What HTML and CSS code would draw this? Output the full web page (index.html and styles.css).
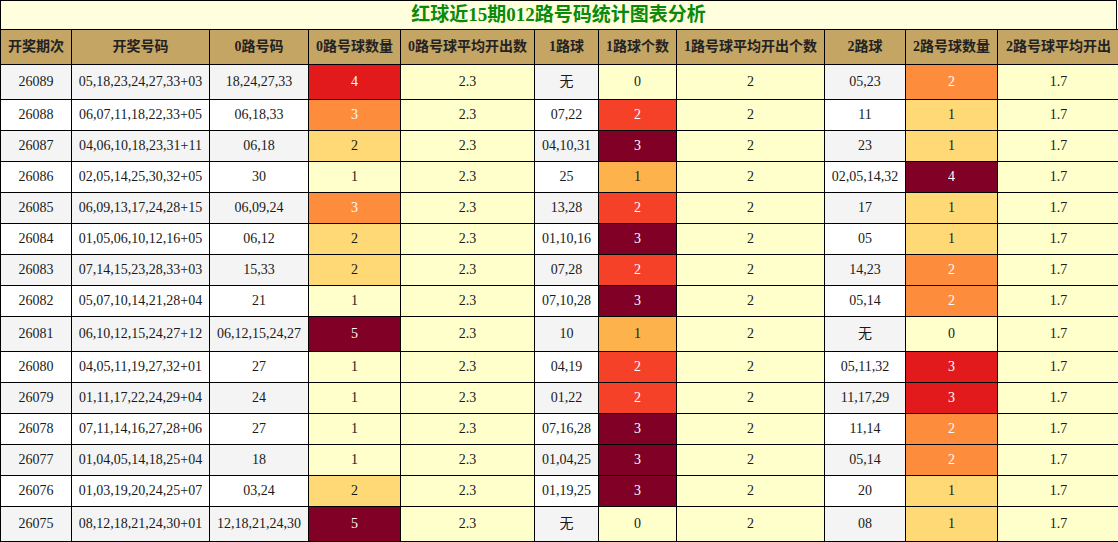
FILE: index.html
```html
<!DOCTYPE html>
<html lang="zh-CN">
<head>
<meta charset="utf-8">
<title>红球近15期012路号码统计图表分析</title>
<link rel="stylesheet" href="styles.css">
</head>
<body>
<div class="wrap">
  <div class="title">红球近15期012路号码统计图表分析</div>
  <table class="tbl">
    <colgroup>
      <col class="c1"><col class="c2"><col class="c3"><col class="c4"><col class="c5"><col class="c6"><col class="c7"><col class="c8"><col class="c9"><col class="c10"><col class="c11">
    </colgroup>
    <thead>
      <tr>
        <th>开奖期次</th><th>开奖号码</th><th>0路号码</th><th>0路号球数量</th><th>0路号球平均开出数</th><th>1路球</th><th>1路球个数</th><th>1路号球平均开出个数</th><th>2路球</th><th>2路号球数量</th><th>2路号球平均开出</th>
      </tr>
    </thead>
    <tbody>
      <tr class="tall"><td class="n">26089</td><td class="n">05,18,23,24,27,33+03</td><td class="n">18,24,27,33</td><td class="h4">4</td><td class="y">2.3</td><td class="n">无</td><td class="y">0</td><td class="y">2</td><td class="n">05,23</td><td class="h3">2</td><td class="y">1.7</td></tr>
      <tr><td class="n">26088</td><td class="n">06,07,11,18,22,33+05</td><td class="n">06,18,33</td><td class="h3">3</td><td class="y">2.3</td><td class="n">07,22</td><td class="g2">2</td><td class="y">2</td><td class="n">11</td><td class="h2">1</td><td class="y">1.7</td></tr>
      <tr><td class="n">26087</td><td class="n">04,06,10,18,23,31+11</td><td class="n">06,18</td><td class="h2">2</td><td class="y">2.3</td><td class="n">04,10,31</td><td class="h5">3</td><td class="y">2</td><td class="n">23</td><td class="h2">1</td><td class="y">1.7</td></tr>
      <tr><td class="n">26086</td><td class="n">02,05,14,25,30,32+05</td><td class="n">30</td><td class="y">1</td><td class="y">2.3</td><td class="n">25</td><td class="g1">1</td><td class="y">2</td><td class="n">02,05,14,32</td><td class="h5">4</td><td class="y">1.7</td></tr>
      <tr><td class="n">26085</td><td class="n">06,09,13,17,24,28+15</td><td class="n">06,09,24</td><td class="h3">3</td><td class="y">2.3</td><td class="n">13,28</td><td class="g2">2</td><td class="y">2</td><td class="n">17</td><td class="h2">1</td><td class="y">1.7</td></tr>
      <tr><td class="n">26084</td><td class="n">01,05,06,10,12,16+05</td><td class="n">06,12</td><td class="h2">2</td><td class="y">2.3</td><td class="n">01,10,16</td><td class="h5">3</td><td class="y">2</td><td class="n">05</td><td class="h2">1</td><td class="y">1.7</td></tr>
      <tr><td class="n">26083</td><td class="n">07,14,15,23,28,33+03</td><td class="n">15,33</td><td class="h2">2</td><td class="y">2.3</td><td class="n">07,28</td><td class="g2">2</td><td class="y">2</td><td class="n">14,23</td><td class="h3">2</td><td class="y">1.7</td></tr>
      <tr><td class="n">26082</td><td class="n">05,07,10,14,21,28+04</td><td class="n">21</td><td class="y">1</td><td class="y">2.3</td><td class="n">07,10,28</td><td class="h5">3</td><td class="y">2</td><td class="n">05,14</td><td class="h3">2</td><td class="y">1.7</td></tr>
      <tr class="tall"><td class="n">26081</td><td class="n">06,10,12,15,24,27+12</td><td class="n">06,12,15,24,27</td><td class="h5">5</td><td class="y">2.3</td><td class="n">10</td><td class="g1">1</td><td class="y">2</td><td class="n">无</td><td class="y">0</td><td class="y">1.7</td></tr>
      <tr><td class="n">26080</td><td class="n">04,05,11,19,27,32+01</td><td class="n">27</td><td class="y">1</td><td class="y">2.3</td><td class="n">04,19</td><td class="g2">2</td><td class="y">2</td><td class="n">05,11,32</td><td class="h4">3</td><td class="y">1.7</td></tr>
      <tr><td class="n">26079</td><td class="n">01,11,17,22,24,29+04</td><td class="n">24</td><td class="y">1</td><td class="y">2.3</td><td class="n">01,22</td><td class="g2">2</td><td class="y">2</td><td class="n">11,17,29</td><td class="h4">3</td><td class="y">1.7</td></tr>
      <tr><td class="n">26078</td><td class="n">07,11,14,16,27,28+06</td><td class="n">27</td><td class="y">1</td><td class="y">2.3</td><td class="n">07,16,28</td><td class="h5">3</td><td class="y">2</td><td class="n">11,14</td><td class="h3">2</td><td class="y">1.7</td></tr>
      <tr><td class="n">26077</td><td class="n">01,04,05,14,18,25+04</td><td class="n">18</td><td class="y">1</td><td class="y">2.3</td><td class="n">01,04,25</td><td class="h5">3</td><td class="y">2</td><td class="n">05,14</td><td class="h3">2</td><td class="y">1.7</td></tr>
      <tr><td class="n">26076</td><td class="n">01,03,19,20,24,25+07</td><td class="n">03,24</td><td class="h2">2</td><td class="y">2.3</td><td class="n">01,19,25</td><td class="h5">3</td><td class="y">2</td><td class="n">20</td><td class="h2">1</td><td class="y">1.7</td></tr>
      <tr class="tall"><td class="n">26075</td><td class="n">08,12,18,21,24,30+01</td><td class="n">12,18,21,24,30</td><td class="h5">5</td><td class="y">2.3</td><td class="n">无</td><td class="y">0</td><td class="y">2</td><td class="n">08</td><td class="h2">1</td><td class="y">1.7</td></tr>
    </tbody>
  </table>
</div>
</body>
</html>
```
FILE: styles.css
```css
html, body {
  margin: 0;
  padding: 0;
  background: #fff;
}
.wrap {
  width: 1118px;
  overflow: hidden;
  font-family: "Liberation Serif", "Noto Sans CJK SC", serif;
}
.title {
  box-sizing: border-box;
  width: 1117px;
  border: 1px solid #000;
  border-bottom: none;
  background: #ffffdd;
  color: #0a8a0a;
  font-size: 19px;
  font-weight: bold;
  line-height: 28px;
  text-align: center;
}
.tbl {
  border-collapse: collapse;
  table-layout: fixed;
  width: 1119px;
}
.c1 { width: 71px; }
.c2 { width: 138px; }
.c3 { width: 99px; }
.c4 { width: 92px; }
.c5 { width: 134px; }
.c6 { width: 64px; }
.c7 { width: 78px; }
.c8 { width: 148px; }
.c9 { width: 81px; }
.c10 { width: 92px; }
.c11 { width: 122px; }
.tbl th, .tbl td {
  border: 1px solid #000;
  text-align: center;
  white-space: nowrap;
  overflow: hidden;
  padding: 0 2px;
}
.tbl th {
  background: #c4a564;
  color: #222;
  font-size: 14px;
  font-weight: bold;
  line-height: 20px;
  padding-top: 7px;
  padding-bottom: 7px;
}
.tbl td {
  font-size: 14px;
  color: #1a1a1a;
  line-height: 16px;
  padding-top: 7px;
  padding-bottom: 7px;
}
.tbl tr.tall td {
  line-height: 20px;
}
.tbl td.n { background: #fff; }
.tbl tbody tr:nth-child(odd) td.n { background: #f4f4f4; }
.tbl td.y { background: #ffffcc; }
.tbl td.h2 { background: #fed976; }
.tbl td.h3 { background: #fd8d3c; color: #fff; }
.tbl td.h4 { background: #e31a1c; color: #fff; }
.tbl td.h5 { background: #800026; color: #fff; }
.tbl td.g1 { background: #feb24c; }
.tbl td.g2 { background: #f44128; color: #fff; }
```
